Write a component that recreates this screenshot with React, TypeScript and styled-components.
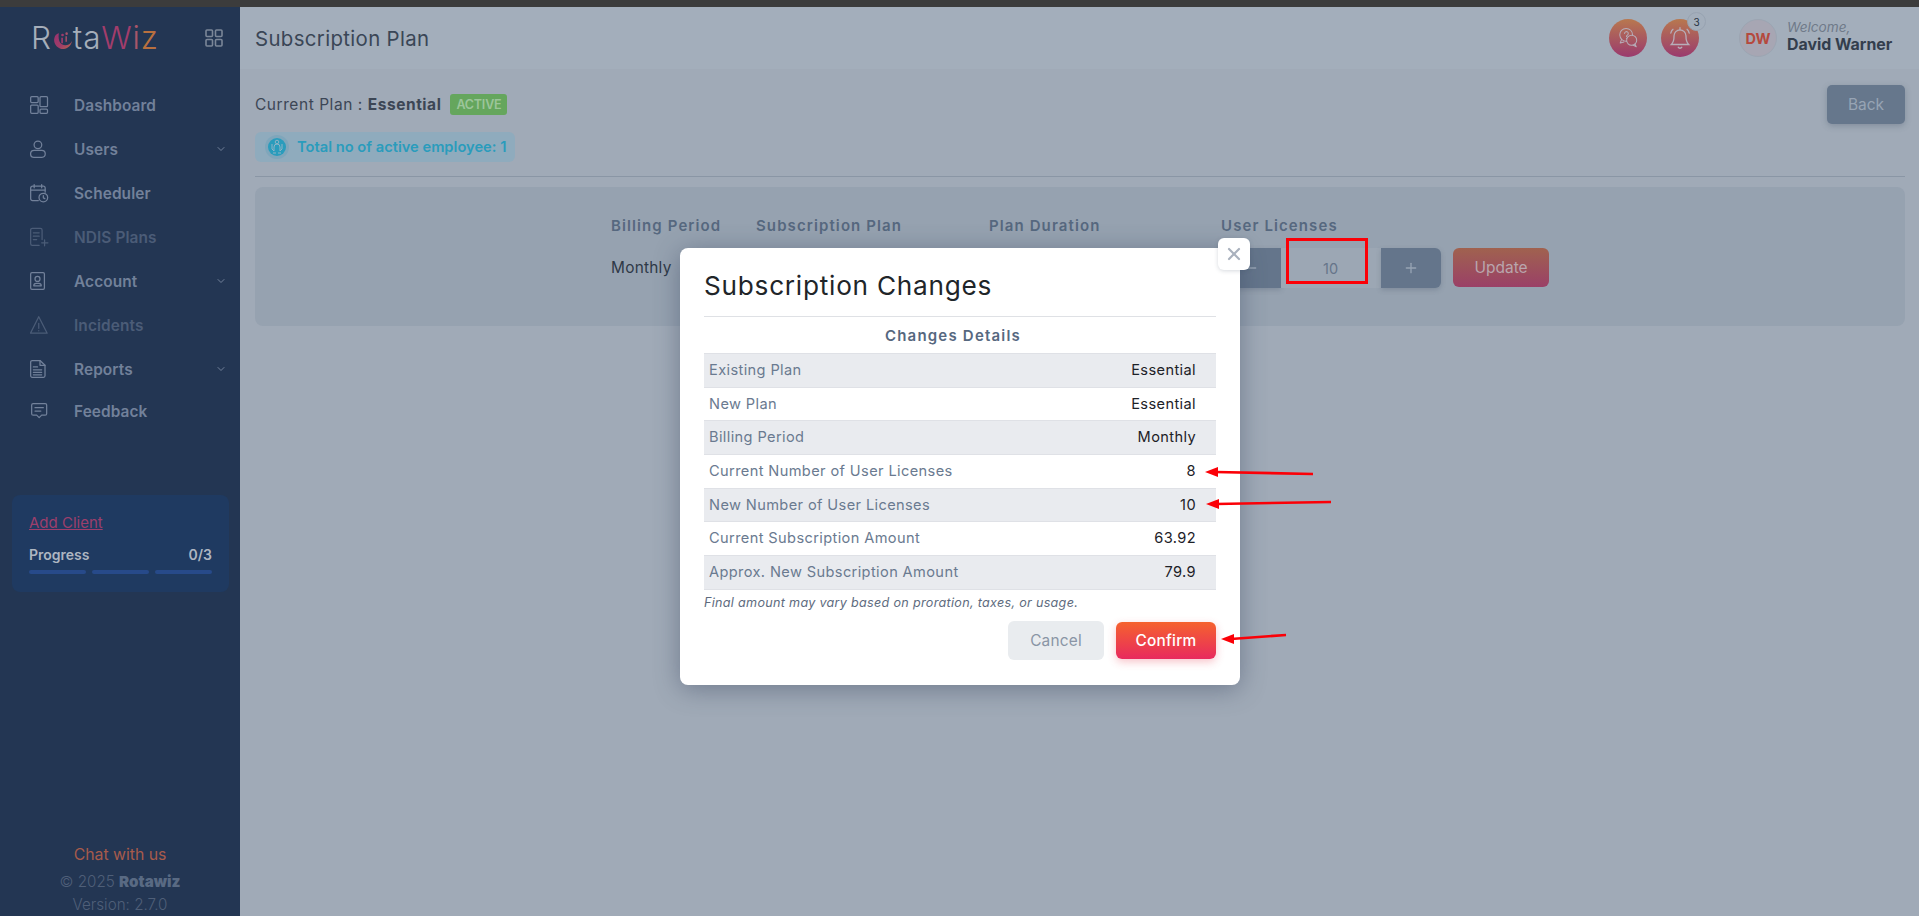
import styled, { createGlobalStyle } from "styled-components";
import { ChevronDown, Plus, Minus, X } from "lucide-react";
import type { ReactNode } from "react";

const GlobalStyle = createGlobalStyle`
  html, body {
    margin: 0;
    padding: 0;
    height: 100%;
    overflow: hidden;
    background: #a0aab7;
    font-family: Inter, "Liberation Sans", sans-serif;
  }
  * { box-sizing: border-box; }
`;

const Page = styled.div`
  width: 1919px;
  height: 916px;
  display: flex;
  flex-direction: column;
  position: relative;
  overflow: hidden;
`;

const BrowserStrip = styled.div`
  height: 7px;
  background: #3c3c3c;
  flex: none;
`;

const Shell = styled.div`
  flex: 1;
  display: flex;
  min-height: 0;
`;

const Sidebar = styled.aside`
  width: 240px;
  flex: none;
  background: #233653;
  display: flex;
  flex-direction: column;
`;

const LogoRow = styled.div`
  height: 62px;
  padding: 0 17px 0 31px;
  display: flex;
  align-items: center;
  justify-content: space-between;
  color: #7b8798;
`;

const Logo = styled.div`
  display: flex;
  align-items: center;
  font-size: 31.5px;
  font-weight: 300;
  letter-spacing: 0.8px;
  color: #a5aeba;
  line-height: 1;
`;

const LogoMark = styled.svg`
  margin: 3px 0 0 1px;
`;

const LogoAccent = styled.span<{ $color: string }>`
  color: ${(p) => p.$color};
`;

const Nav = styled.nav`
  padding-top: 14px;
  display: flex;
  flex-direction: column;
`;

const NavItem = styled.div<{ $muted?: boolean; $short?: boolean }>`
  height: ${(p) => (p.$short ? "40px" : "44px")};
  padding: 0 13px 0 30px;
  display: flex;
  align-items: center;
  gap: 24px;
  font-size: 15.4px;
  font-weight: 600;
  letter-spacing: 0.1px;
  color: ${(p) => (p.$muted ? "#4b5c77" : "#72819a")};
`;

const NavIcon = styled.span`
  width: 20px;
  height: 24px;
  display: flex;
  align-items: center;
  flex: none;
`;

const NavLabel = styled.span`
  flex: 1;
`;

const ProgressCard = styled.div`
  margin: 64px 11px 0 12px;
  height: 97px;
  padding: 19px 17px 0;
  background: #1f3a61;
  border-radius: 8px;
`;

const AddClient = styled.a`
  display: block;
  font-size: 15px;
  color: #9c3f6c;
  text-decoration: underline;
  line-height: 18px;
`;

const ProgressHead = styled.div`
  margin-top: 14px;
  display: flex;
  justify-content: space-between;
  font-size: 14px;
  font-weight: 600;
  color: #aeb6c1;
  line-height: 18px;
`;

const ProgressBars = styled.div`
  margin-top: 6px;
  display: flex;
  gap: 6px;
`;

const ProgressBar = styled.div`
  flex: 1;
  height: 4px;
  border-radius: 2px;
  background: #274a8a;
`;

const SideFooter = styled.div`
  margin-top: auto;
  padding-bottom: 0;
  display: flex;
  flex-direction: column;
  align-items: center;
  color: #4f5f78;
  font-size: 15.2px;
  font-weight: 300;
`;

const ChatLink = styled.div`
  color: #a85b4b;
  font-size: 15.8px;
  font-weight: 400;
  line-height: 24px;
  margin-bottom: 3px;
`;

const FooterLine = styled.div`
  line-height: 23px;
`;

const Brand = styled.b`
  font-weight: 900;
  color: #596a83;
`;

const Main = styled.main`
  flex: 1;
  display: flex;
  flex-direction: column;
  min-width: 0;
`;

const Topbar = styled.header`
  height: 62px;
  flex: none;
  padding: 0 14px 0 15px;
  background: #a3aebb;
  display: flex;
  align-items: center;
`;

const PageTitle = styled.h1`
  margin: 0;
  flex: 1;
  font-size: 20.4px;
  font-weight: 400;
  letter-spacing: 0.35px;
  color: #3a4656;
`;

const RoundIcon = styled.div`
  width: 38px;
  height: 38px;
  border-radius: 50%;
  background: linear-gradient(180deg, #b8784f 0%, #9a3a6e 100%);
  display: flex;
  align-items: center;
  justify-content: center;
  position: relative;
  margin-right: 14px;
`;

const CountBadge = styled.span`
  position: absolute;
  top: -7px;
  right: -7px;
  width: 19px;
  height: 19px;
  border-radius: 50%;
  background: #a3aebb;
  border: 1px solid #98a3b1;
  color: #27313f;
  font-size: 10px;
  display: flex;
  align-items: center;
  justify-content: center;
`;

const Avatar = styled.div`
  margin-left: 26px;
  width: 38px;
  height: 38px;
  border-radius: 50%;
  background: #a7a6b3;
  border: 1px solid #9ca5b2;
  color: #b5493d;
  font-size: 14.5px;
  font-weight: 700;
  display: flex;
  align-items: center;
  justify-content: center;
`;

const UserBlock = styled.div`
  margin-left: 10px;
  margin-bottom: 2px;
  display: flex;
  flex-direction: column;
  width: 118px;
`;

const Welcome = styled.span`
  font-size: 13.6px;
  font-style: italic;
  color: #6f7a89;
  line-height: 16px;
`;

const UserName = styled.span`
  font-size: 15.9px;
  font-weight: 700;
  color: #333e4d;
  line-height: 20px;
  white-space: nowrap;
`;

const Body = styled.div`
  flex: 1;
  padding: 16px 14px 0 15px;
  background: #a0aab7;
`;

const PlanHead = styled.div`
  display: flex;
  align-items: flex-start;
  justify-content: space-between;
  height: 92px;
  border-bottom: 1px solid #8a96a5;
`;

const PlanInfo = styled.div`
  display: flex;
  flex-direction: column;
  align-items: flex-start;
`;

const PlanLine = styled.div`
  margin-top: 9px;
  height: 21px;
  display: flex;
  align-items: center;
  gap: 9px;
  font-size: 15.5px;
  letter-spacing: 0.55px;
  color: #3c4655;
`;

const ActiveBadge = styled.span`
  width: 57px;
  height: 21px;
  border-radius: 3px;
  background: #65a65d;
  color: #9cc59a;
  font-size: 12.5px;
  font-weight: 600;
  letter-spacing: -0.2px;
  display: flex;
  align-items: center;
  justify-content: center;
`;

const EmployeePill = styled.div`
  margin-top: 17px;
  width: 260px;
  height: 30px;
  padding-left: 10px;
  border-radius: 6px;
  background: #8fabbd;
  color: #2a9cbc;
  font-size: 14.7px;
  font-weight: 600;
  display: flex;
  align-items: center;
  gap: 8px;
  white-space: nowrap;
`;

const BackButton = styled.button`
  width: 78px;
  height: 39px;
  border: 0;
  border-radius: 5px;
  background: #66778c;
  color: #97a4b4;
  font: inherit;
  font-size: 15.5px;
  box-shadow: 0 2px 6px rgba(60, 75, 95, 0.3);
`;

const PlanPanel = styled.section`
  margin-top: 10px;
  height: 139px;
  padding: 29px 0 0 356px;
  border-radius: 8px;
  background: #96a2b0;
  display: flex;
`;

const PlanColumn = styled.div<{ $width: number }>`
  width: ${(p) => p.$width}px;
  display: flex;
  flex-direction: column;
  flex: none;
`;

const ColumnTitle = styled.div`
  height: 20px;
  font-size: 15px;
  font-weight: 600;
  letter-spacing: 1.1px;
  color: #56687f;
  white-space: nowrap;
`;

const ColumnValue = styled.div`
  margin-top: 22px;
  font-size: 15.4px;
  letter-spacing: 0.25px;
  color: #2e3947;
`;

const Stepper = styled.div`
  margin-top: 12px;
  display: flex;
  align-items: flex-start;
`;

const StepButton = styled.div<{ $side: "left" | "right"; $width: number }>`
  width: ${(p) => p.$width}px;
  height: 40px;
  background: #64758b;
  color: #97a4b4;
  border-radius: ${(p) => (p.$side === "left" ? "6px 0 0 6px" : "0 6px 6px 0")};
  display: flex;
  align-items: center;
  justify-content: center;
  box-shadow: 0 2px 5px rgba(60, 75, 95, 0.25);
`;

const StepInput = styled.div`
  width: 100px;
  height: 40px;
  background: #9ca7b4;
  color: #66758a;
  font-size: 14.5px;
  padding-left: 42px;
  display: flex;
  align-items: center;
`;

const UpdateButton = styled.div`
  margin-left: 12px;
  width: 96px;
  height: 39px;
  border-radius: 6px;
  background: linear-gradient(180deg, #a0624f 0%, #9a4067 100%);
  color: #b9a6ad;
  font-size: 15.5px;
  display: flex;
  align-items: center;
  justify-content: center;
`;

const Modal = styled.div`
  position: absolute;
  left: 680px;
  top: 248px;
  width: 560px;
  height: 437px;
  padding: 0 24px;
  background: #fff;
  border-radius: 8px;
  box-shadow: 0 4px 26px rgba(50, 65, 90, 0.45);
`;

const ModalTitle = styled.h2`
  margin: 0;
  height: 69px;
  padding: 20px 0 0;
  border-bottom: 1px solid #dfe1e5;
  font-size: 26.2px;
  font-weight: 400;
  line-height: 36px;
  letter-spacing: 0.75px;
  color: #212529;
`;

const CloseButton = styled.div`
  position: absolute;
  right: -10px;
  top: -10px;
  width: 32px;
  height: 32px;
  border-radius: 6px;
  background: #fff;
  color: #a9b1bd;
  box-shadow: 0 1px 4px rgba(50, 65, 90, 0.2);
  display: flex;
  align-items: center;
  justify-content: center;
`;

const DetailsHead = styled.div`
  height: 36px;
  padding-right: 14px;
  display: flex;
  align-items: center;
  justify-content: center;
  font-size: 15px;
  font-weight: 600;
  letter-spacing: 1.2px;
  color: #56687f;
`;

const DetailRow = styled.div<{ $shaded: boolean }>`
  height: 33.7px;
  padding: 0 20px 1px 5px;
  display: flex;
  align-items: center;
  justify-content: space-between;
  border-top: 1px solid #dfe1e6;
  background: ${(p) => (p.$shaded ? "#e9ebef" : "#fff")};
  font-size: 14.6px;
  letter-spacing: 0.38px;
`;

const RowLabel = styled.span`
  color: #6a7a90;
`;

const RowValue = styled.span`
  color: #1d2127;
`;

const DetailList = styled.div`
  border-bottom: 1px solid #dfe1e6;
`;

const Disclaimer = styled.div`
  margin-top: 5px;
  font-size: 12.6px;
  font-style: italic;
  letter-spacing: 0.3px;
  line-height: 16px;
  color: #5e6b7e;
`;

const ModalActions = styled.div`
  margin-top: 10px;
  display: flex;
  justify-content: flex-end;
  align-items: center;
  gap: 12px;
`;

const CancelButton = styled.div`
  width: 96px;
  height: 39px;
  border-radius: 6px;
  background: #e9ecef;
  color: #8a95a5;
  font-size: 15.4px;
  letter-spacing: 0.2px;
  display: flex;
  align-items: center;
  justify-content: center;
`;

const ConfirmButton = styled.div`
  width: 100px;
  height: 37px;
  border-radius: 6px;
  background: linear-gradient(180deg, #f5622e 0%, #e82a5e 100%);
  color: #fff;
  font-size: 15.4px;
  font-weight: 500;
  letter-spacing: 0.2px;
  box-shadow: 0 3px 8px rgba(232, 60, 80, 0.3);
  display: flex;
  align-items: center;
  justify-content: center;
`;

const HighlightBox = styled.div`
  position: absolute;
  left: 1286px;
  top: 238px;
  width: 82px;
  height: 46px;
  border: 3px solid #fb0007;
`;

const Annotation = styled.svg`
  position: absolute;
  left: 0;
  top: 0;
  pointer-events: none;
`;

const IconStroke = ({ children, size = 24, sw = 1.5, view = 24 }: { children: ReactNode; size?: number; sw?: number; view?: number }) => (
  <svg width={size} height={size} viewBox={`0 0 ${view} ${view}`} fill="none" stroke="currentColor" strokeWidth={sw} strokeLinecap="round" strokeLinejoin="round">
    {children}
  </svg>
);

const navItems = [
  {
    label: "Dashboard",
    icon: (
      <>
        <rect x="0.8" y="2" width="9" height="7" rx="1.2" />
        <rect x="0.8" y="12" width="9" height="10" rx="1.2" />
        <rect x="12" y="2" width="9" height="12" rx="1.2" />
        <rect x="12" y="17" width="9" height="5" rx="1.2" />
      </>
    ),
  },
  {
    label: "Users",
    chevron: true,
    icon: (
      <>
        <circle cx="9.5" cy="7" r="4.6" />
        <path d="M5 13.5h9c2.6 0 4.3 2 4.3 4.3 0 2.4-1.6 4.2-4 4.2H4.7c-2.4 0-4-1.8-4-4.2 0-2.3 1.7-4.3 4.3-4.3z" />
      </>
    ),
  },
  {
    label: "Scheduler",
    icon: (
      <>
        <path d="M10 21H3a2.2 2.2 0 0 1-2.2-2.2V6A2.2 2.2 0 0 1 3 3.8h13A2.2 2.2 0 0 1 18.2 6v5" />
        <path d="M.8 8.5h17.4M5 1.8v4M14 1.8v4" />
        <circle cx="16" cy="17.5" r="5.2" />
        <path d="M16 15v2.8l1.8 1" />
      </>
    ),
  },
  {
    label: "NDIS Plans",
    muted: true,
    icon: (
      <>
        <path d="M11 22H2.8a2 2 0 0 1-2-2V3.5a2 2 0 0 1 2-2h9.7a2 2 0 0 1 2 2V15" />
        <path d="M4 7h7M4 11h7M4 15h4M17.5 15.5v7M14 19h7.5" />
      </>
    ),
  },
  {
    label: "Account",
    chevron: true,
    icon: (
      <>
        <rect x="0.8" y="2" width="16.5" height="20" rx="1.6" />
        <circle cx="9" cy="9.5" r="3" />
        <path d="M4.5 17.8c0-2 1.4-3 3-3h3c1.6 0 3 1 3 3z" />
      </>
    ),
  },
  {
    label: "Incidents",
    muted: true,
    icon: (
      <>
        <path d="M10.5 2 .6 21.8h20z" />
        <path d="M10.5 10v6M10.5 18.8v.2" />
      </>
    ),
  },
  {
    label: "Reports",
    chevron: true,
    icon: (
      <>
        <path d="M12 1.8H2.6A1.8 1.8 0 0 0 .8 3.6v16.6A1.8 1.8 0 0 0 2.6 22h13.6a1.8 1.8 0 0 0 1.8-1.8V7.5z" />
        <path d="M12 1.8v5.7h6M4 9.5h5M4 13h10M4 16h10M4 19h10" />
      </>
    ),
  },
  {
    label: "Feedback",
    short: true,
    icon: (
      <>
        <path d="M3.8 3h14.4a1.8 1.8 0 0 1 1.8 1.8v10.4a1.8 1.8 0 0 1-1.8 1.8H14l-3 3-3-3H3.8A1.8 1.8 0 0 1 2 15.2V4.800A1.8 1.8 0 0 1 3.800 3z" />
        <path d="M6 8h10M6 12h7" />
      </>
    ),
  },
];

const changeRows = [
  ["Existing Plan", "Essential"],
  ["New Plan", "Essential"],
  ["Billing Period", "Monthly"],
  ["Current Number of User Licenses", "8"],
  ["New Number of User Licenses", "10"],
  ["Current Subscription Amount", "63.92"],
  ["Approx. New Subscription Amount", "79.9"],
];

function RedArrow({ x1, y1, x2, y2 }: { x1: number; y1: number; x2: number; y2: number }) {
  return (
    <>
      <line x1={x1} y1={y1} x2={x2 + 10} y2={y2} stroke="#fb0007" strokeWidth="2.6" />
      <polygon points={`${x2},${y2} ${x2 + 13},${y2 - 5} ${x2 + 13},${y2 + 5}`} fill="#fb0007" />
    </>
  );
}

function App() {
  return (
    <Page>
      <GlobalStyle />
      <BrowserStrip />
      <Shell>
        <Sidebar>
          <LogoRow>
            <Logo>
              R
              <LogoMark width="20" height="22" viewBox="0 0 22 24">
                <defs>
                  <linearGradient id="logoDot" x1="0" y1="0" x2="1" y2="1">
                    <stop offset="0" stopColor="#98326f" />
                    <stop offset="0.6" stopColor="#a03d68" />
                    <stop offset="1" stopColor="#b86a48" />
                  </linearGradient>
                </defs>
                <path d="M3 6.500A9.800 9.800 0 1 0 20.800 13c-1.500 3.200-4.200 4.800-7.500 4.800C8.500 17.800 5 13 6.500 4.500 5 4.800 4 5.500 3 6.500z" fill="url(#logoDot)" />
                <circle cx="10.500" cy="6.500" r="1.500" fill="#a03a6c" />
                <path d="M10 9.500v6" stroke="#a03a6c" strokeWidth="1.800" />
                <circle cx="15" cy="5" r="1.400" fill="#a8506a" />
                <path d="M14.500 8v6" stroke="#a8506a" strokeWidth="1.600" />
              </LogoMark>
              ta
              <LogoAccent $color="#a23d6c">W</LogoAccent>
              <LogoAccent $color="#a8566a">i</LogoAccent>
              <LogoAccent $color="#b8703f">z</LogoAccent>
            </Logo>
            <IconStroke size={18} view={18} sw={1.6}>
              <rect x="1" y="1" width="6.500" height="6.500" rx="1" />
              <rect x="10.500" y="1" width="6.500" height="6.500" rx="1" />
              <rect x="1" y="10.500" width="6.500" height="6.500" rx="1" />
              <rect x="10.500" y="10.500" width="6.500" height="6.500" rx="1" />
            </IconStroke>
          </LogoRow>
          <Nav>
            {navItems.map((item) => (
              <NavItem key={item.label} $muted={item.muted} $short={item.short}>
                <NavIcon>
                  <IconStroke>{item.icon}</IconStroke>
                </NavIcon>
                <NavLabel>{item.label}</NavLabel>
                {item.chevron ? <ChevronDown size={12} /> : null}
              </NavItem>
            ))}
          </Nav>
          <ProgressCard>
            <AddClient>Add Client</AddClient>
            <ProgressHead>
              <span>Progress</span>
              <span>0/3</span>
            </ProgressHead>
            <ProgressBars>
              <ProgressBar />
              <ProgressBar />
              <ProgressBar />
            </ProgressBars>
          </ProgressCard>
          <SideFooter>
            <ChatLink>Chat with us</ChatLink>
            <FooterLine>
              © 2025 <Brand>Rotawiz</Brand>
            </FooterLine>
            <FooterLine>Version: 2.7.0</FooterLine>
          </SideFooter>
        </Sidebar>
        <Main>
          <Topbar>
            <PageTitle>Subscription Plan</PageTitle>
            <RoundIcon>
              <svg width="22" height="22" viewBox="0 0 24 24" fill="none" stroke="#b7aeb9" strokeWidth="1.1" strokeLinecap="round" strokeLinejoin="round">
                <path d="M10.500 15.500A7 7 0 1 1 17 8.600" />
                <path d="M5 13.500 3.500 17.500l4-1.200" />
                <circle cx="16" cy="14.500" r="5.500" />
                <path d="M19.500 18.500l1.500 3-3.500-1.800" />
                <path d="M8.300 7a2 2 0 1 1 3 1.800c-.7.400-1 .800-1 1.600M10.300 12.400v.200" />
              </svg>
            </RoundIcon>
            <RoundIcon>
              <svg width="26" height="26" viewBox="0 0 24 24" fill="none" stroke="#b7aeb9" strokeWidth="1.200" strokeLinecap="round">
                <path d="M12 4.500a5.500 5.500 0 0 0-5.500 5.500c0 4.500-.8 6.500-2.500 8h16c-1.700-1.500-2.500-3.500-2.500-8A5.500 5.500 0 0 0 12 4.500z" />
                <path d="M12 2.500v2M10.300 20.500a2 2 0 0 0 3.400 0M3.500 7.500c.4-1.500 1-2.500 2-3.500M20.500 7.500c-.4-1.500-1-2.500-2-3.500" />
              </svg>
              <CountBadge>3</CountBadge>
            </RoundIcon>
            <Avatar>DW</Avatar>
            <UserBlock>
              <Welcome>Welcome,</Welcome>
              <UserName>David Warner</UserName>
            </UserBlock>
          </Topbar>
          <Body>
            <PlanHead>
              <PlanInfo>
                <PlanLine>
                  <span>
                    Current Plan : <b>Essential</b>
                  </span>
                  <ActiveBadge>ACTIVE</ActiveBadge>
                </PlanLine>
                <EmployeePill>
                  <svg width="24" height="24" viewBox="0 0 24 24" fill="none">
                    <circle cx="12" cy="12" r="12" fill="#7fa6bb" />
                    <circle cx="12" cy="12" r="9" fill="#2a9cbc" />
                    <g stroke="#8fb4c6" strokeWidth="1" fill="none">
                      <circle cx="12" cy="7" r="1.800" />
                      <path d="M9 16v-4a3 3 0 0 1 6 0v4M7 9v5l2 2M17 9v5l-2 2M8 18h3M13 18h3" />
                    </g>
                  </svg>
                  Total no of active employee: 1
                </EmployeePill>
              </PlanInfo>
              <BackButton>Back</BackButton>
            </PlanHead>
            <PlanPanel>
              <PlanColumn $width={145}>
                <ColumnTitle>Billing Period</ColumnTitle>
                <ColumnValue>Monthly</ColumnValue>
              </PlanColumn>
              <PlanColumn $width={233}>
                <ColumnTitle>Subscription Plan</ColumnTitle>
              </PlanColumn>
              <PlanColumn $width={232}>
                <ColumnTitle>Plan Duration</ColumnTitle>
              </PlanColumn>
              <PlanColumn $width={340}>
                <ColumnTitle>User Licenses</ColumnTitle>
                <Stepper>
                  <StepButton $side="left" $width={60}>
                    <Minus size={16} />
                  </StepButton>
                  <StepInput>10</StepInput>
                  <StepButton $side="right" $width={60}>
                    <Plus size={16} />
                  </StepButton>
                  <UpdateButton>Update</UpdateButton>
                </Stepper>
              </PlanColumn>
            </PlanPanel>
          </Body>
        </Main>
      </Shell>

      <Modal>
        <CloseButton>
          <X size={20} strokeWidth={2.6} />
        </CloseButton>
        <ModalTitle>Subscription Changes</ModalTitle>
        <DetailsHead>Changes Details</DetailsHead>
        <DetailList>
          {changeRows.map(([label, value], i) => (
            <DetailRow key={label} $shaded={i % 2 === 0}>
              <RowLabel>{label}</RowLabel>
              <RowValue>{value}</RowValue>
            </DetailRow>
          ))}
        </DetailList>
        <Disclaimer>Final amount may vary based on proration, taxes, or usage.</Disclaimer>
        <ModalActions>
          <CancelButton>Cancel</CancelButton>
          <ConfirmButton>Confirm</ConfirmButton>
        </ModalActions>
      </Modal>

      <HighlightBox />
      <Annotation width="1919" height="916">
        <RedArrow x1={1313} y1={474} x2={1205} y2={472} />
        <RedArrow x1={1331} y1={502} x2={1206} y2={504} />
        <RedArrow x1={1286} y1={635} x2={1221} y2={639} />
      </Annotation>
    </Page>
  );
}

export default App;
